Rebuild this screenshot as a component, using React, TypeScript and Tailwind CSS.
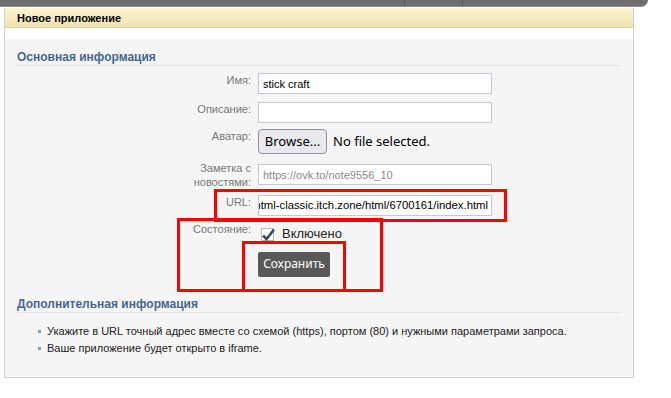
const Row = ({ label, className, children }: { label: React.ReactNode; className?: string; children: React.ReactNode }) => (
  <div className={"flex items-start " + (className ?? "")}>
    <div className="w-[246px] shrink-0 text-right text-[11px] leading-[14px] text-[#777]">{label}</div>
    <div className="ml-[7px] flex items-start">{children}</div>
  </div>
)

const inputCls =
  "w-[234px] h-[21px] border border-[#c0cad5] bg-white px-[4px] text-[11px] text-black outline-none placeholder:text-[#8a8a8a] font-['Liberation_Sans',Arial,sans-serif]"

export default function App() {
  return (
    <div className="relative w-[671px] h-[398px] bg-white font-['Liberation_Sans',Arial,sans-serif] overflow-hidden">
      {/* top bar */}
      <div className="relative h-[7px] w-[648px] rounded-br-[7px] bg-[#6d6d6d] border-b border-[#8c8c8c]">
        <div className="absolute left-[404px] top-0 h-full w-px bg-[#585858]" />
        <div className="absolute left-[462px] top-0 h-full w-px bg-[#585858]" />
      </div>

      <div className="ml-[4px] mt-px w-[630px] border-x border-b border-[#c9d2dc]">
        <div className="h-[20px] border-b border-[#dccf92] bg-gradient-to-b from-[#fcf4d2] to-[#efe4b0] pl-[12px] text-[11px] font-bold leading-[20px] text-black">
          Новое приложение
        </div>
        <div className="h-[11px] bg-white" />
        <div className="h-[338px] bg-[#f5f5f5] pt-[11px]">
          <div className="mx-[12px] border-b border-[#e2e5e9] text-[12px] font-bold leading-[15px] text-[#45688e]">
            Основная информация
          </div>

          <div className="mt-[7px]">
            <Row label="Имя:">
              <input className={inputCls} defaultValue="stick craft" />
            </Row>
            <Row label="Описание:" className="mt-[8px]">
              <input className={inputCls} />
            </Row>
            <Row label="Аватар:" className="mt-[6px]">
              <div className="flex items-center font-['Noto_Sans',sans-serif]">
                <button className="h-[25px] w-[69px] rounded-[4px] border border-[#8f8f9d] bg-[#e9e9ed] text-[13px] text-black">
                  Browse...
                </button>
                <span className="ml-[6px] text-[13px] text-black">No file selected.</span>
              </div>
            </Row>
            <Row
              label={
                <>
                  Заметка с
                  <br />
                  новостями:
                </>
              }
              className="mt-[7px]"
            >
              <input className={inputCls + " mt-[3px]"} placeholder="https://ovk.to/note9556_10" />
            </Row>
            <Row label="URL:" className="mt-[6px]">
              <div className="flex h-[21px] w-[234px] items-center justify-end overflow-hidden whitespace-nowrap border border-[#c0cad5] bg-white pr-[3px] text-[11.3px] text-black">
                html-classic.itch.zone/html/6700161/index.html
              </div>
            </Row>
            <Row label="Состояние:" className="mt-[6px]">
              <div className="mt-[5px] flex items-center">
                <div className="relative ml-[3px] h-[13px] w-[13px] border border-[#b5b5b5] bg-white">
                  <svg className="absolute -left-[1px] -top-[2px]" width="15" height="15" viewBox="0 0 15 15">
                    <path d="M2 8.5 L5.5 12 L13 2.5" fill="none" stroke="#2c4a72" strokeWidth="2.6" strokeLinejoin="miter" />
                  </svg>
                </div>
                <span className="ml-[8px] text-[13px] leading-[14px] text-[#222]">Включено</span>
              </div>
            </Row>
            <div className="ml-[253px] mt-[10px]">
              <button className="h-[25px] w-[72px] rounded-[2px] bg-[#595959] text-[12px] text-white font-['Noto_Sans',sans-serif]">
                Сохранить
              </button>
            </div>
          </div>

          <div className="mx-[12px] mt-[20px] border-b border-[#e2e5e9] text-[12px] font-bold leading-[15px] text-[#45688e]">
            Дополнительная информация
          </div>
          <ul className="ml-[33px] mt-[10px] text-[11px] leading-[17px] text-[#222]">
            <li className="flex items-center">
              <span className="mr-[6px] h-[3px] w-[3px] bg-[#8a9bb2]" />
              Укажите в URL точный адрес вместе со схемой (https), портом (80) и нужными параметрами запроса.
            </li>
            <li className="flex items-center">
              <span className="mr-[6px] h-[3px] w-[3px] bg-[#8a9bb2]" />
              Ваше приложение будет открыто в iframe.
            </li>
          </ul>
        </div>
      </div>

      {/* red highlight boxes */}
      <div className="absolute left-[214px] top-[189px] h-[33px] w-[293px] border-[3px] border-[#ff0000]" />
      <div className="absolute left-[177px] top-[218px] h-[74px] w-[206px] border-[3px] border-[#ff0000]" />
      <div className="absolute left-[242px] top-[241px] h-[51px] w-[104px] border-[3px] border-[#ff0000]" />
    </div>
  )
}
